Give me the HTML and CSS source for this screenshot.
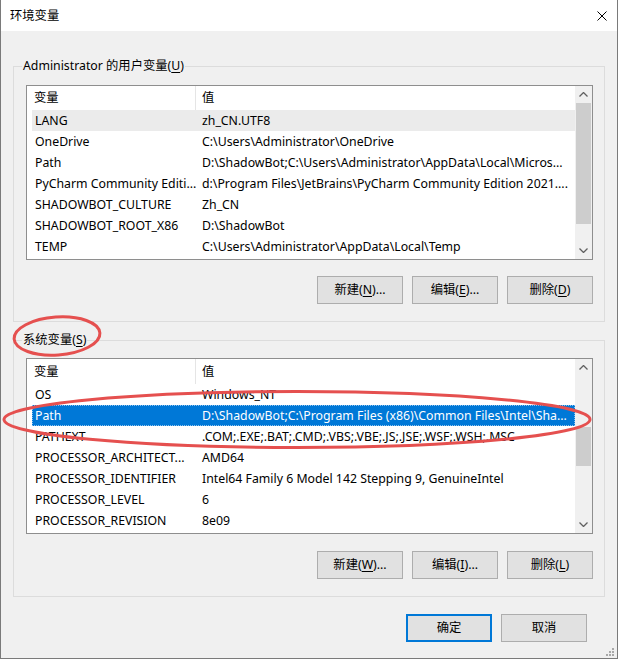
FILE: index.html
```html
<!DOCTYPE html>
<html lang="zh-CN">
<head>
  <meta charset="UTF-8">
  <title>环境变量</title>
  <link rel="stylesheet" href="styles.css">
</head>
<body>
  <div class="window">
    <div class="titlebar">
      <span class="title">环境变量</span>
      <svg class="close" width="10" height="10" viewBox="0 0 10 10">
        <path d="M0.5 0.5 L9.5 9.5 M9.5 0.5 L0.5 9.5" stroke="#000" stroke-width="1" fill="none"/>
      </svg>
    </div>

    <!-- 用户变量 -->
    <fieldset class="group group-user">
      <legend>Administrator 的用户变量(<u>U</u>)</legend>
      <div class="listview">
        <div class="list">
          <div class="list-head">
            <span class="head-name">变量</span>
            <span class="head-value">值</span>
          </div>
          <div class="row row-inactive"><span class="name">LANG</span><span class="value">zh_CN.UTF8</span></div>
          <div class="row"><span class="name">OneDrive</span><span class="value">C:\Users\Administrator\OneDrive</span></div>
          <div class="row"><span class="name">Path</span><span class="value">D:\ShadowBot;C:\Users\Administrator\AppData\Local\Micros...</span></div>
          <div class="row"><span class="name">PyCharm Community Editi...</span><span class="value">d:\Program Files\JetBrains\PyCharm Community Edition 2021....</span></div>
          <div class="row"><span class="name">SHADOWBOT_CULTURE</span><span class="value">Zh_CN</span></div>
          <div class="row"><span class="name">SHADOWBOT_ROOT_X86</span><span class="value">D:\ShadowBot</span></div>
          <div class="row"><span class="name">TEMP</span><span class="value">C:\Users\Administrator\AppData\Local\Temp</span></div>
        </div>
        <div class="scrollbar">
          <div class="arrow">
            <svg width="9" height="5" viewBox="0 0 9 5"><polyline points="0.5,4.5 4.5,0.5 8.5,4.5" fill="none" stroke="#606060" stroke-width="1.3"/></svg>
          </div>
          <div class="thumb thumb-user"></div>
          <div class="track"></div>
          <div class="arrow">
            <svg width="9" height="5" viewBox="0 0 9 5"><polyline points="0.5,0.5 4.5,4.5 8.5,0.5" fill="none" stroke="#606060" stroke-width="1.3"/></svg>
          </div>
        </div>
      </div>
      <div class="buttons">
        <button class="btn">新建(<u>N</u>)...</button>
        <button class="btn">编辑(<u>E</u>)...</button>
        <button class="btn">删除(<u>D</u>)</button>
      </div>
    </fieldset>

    <!-- 系统变量 -->
    <fieldset class="group group-system">
      <legend>系统变量(<u>S</u>)</legend>
      <div class="listview">
        <div class="list">
          <div class="list-head">
            <span class="head-name">变量</span>
            <span class="head-value">值</span>
          </div>
          <div class="row"><span class="name">OS</span><span class="value">Windows_NT</span></div>
          <div class="row row-selected"><span class="name">Path</span><span class="value">D:\ShadowBot;C:\Program Files (x86)\Common Files\Intel\Sha...</span></div>
          <div class="row"><span class="name">PATHEXT</span><span class="value">.COM;.EXE;.BAT;.CMD;.VBS;.VBE;.JS;.JSE;.WSF;.WSH;.MSC</span></div>
          <div class="row"><span class="name">PROCESSOR_ARCHITECT...</span><span class="value">AMD64</span></div>
          <div class="row"><span class="name">PROCESSOR_IDENTIFIER</span><span class="value">Intel64 Family 6 Model 142 Stepping 9, GenuineIntel</span></div>
          <div class="row"><span class="name">PROCESSOR_LEVEL</span><span class="value">6</span></div>
          <div class="row"><span class="name">PROCESSOR_REVISION</span><span class="value">8e09</span></div>
        </div>
        <div class="scrollbar">
          <div class="arrow">
            <svg width="9" height="5" viewBox="0 0 9 5"><polyline points="0.5,4.5 4.5,0.5 8.5,4.5" fill="none" stroke="#606060" stroke-width="1.3"/></svg>
          </div>
          <div class="thumb thumb-system"></div>
          <div class="track"></div>
          <div class="arrow">
            <svg width="9" height="5" viewBox="0 0 9 5"><polyline points="0.5,0.5 4.5,4.5 8.5,0.5" fill="none" stroke="#606060" stroke-width="1.3"/></svg>
          </div>
        </div>
      </div>
      <div class="buttons">
        <button class="btn">新建(<u>W</u>)...</button>
        <button class="btn">编辑(<u>I</u>)...</button>
        <button class="btn">删除(<u>L</u>)</button>
      </div>
    </fieldset>

    <div class="footer">
      <button class="btn btn-default">确定</button>
      <button class="btn">取消</button>
    </div>

    <!-- 红色圈注 + 右下角拖拽点 -->
    <svg class="overlay" width="618" height="659" viewBox="0 0 618 659">
      <ellipse cx="57" cy="336" rx="43" ry="19" transform="rotate(-4 57 336)" fill="none" stroke="#e5504f" stroke-width="3"/>
      <ellipse cx="297" cy="419.5" rx="293" ry="28" fill="none" stroke="#e5504f" stroke-width="3"/>
      <g fill="#a8a8a8">
        <rect x="612" y="648" width="2" height="2"/>
        <rect x="609" y="651" width="2" height="2"/>
        <rect x="612" y="651" width="2" height="2"/>
        <rect x="606" y="654" width="2" height="2"/>
        <rect x="609" y="654" width="2" height="2"/>
        <rect x="612" y="654" width="2" height="2"/>
      </g>
    </svg>
  </div>
</body>
</html>
```

FILE: styles.css
```css
body {
  margin: 0;
  font-family: "Noto Sans", "Noto Sans CJK SC", sans-serif;
  font-size: 12.3px;
  line-height: 16px;
  color: #000;
  background: #fff;
}

.window {
  position: relative;
  width: 616px;
  height: 658px;
  border: 1px solid #7a7a7a;
  border-top: none;
  background: #f0f0f0;
}

/* 标题栏 */
.titlebar {
  height: 31px;
  display: flex;
  justify-content: space-between;
  align-items: center;
  padding: 0 10px 0 9px;
  background: #fff;
}

.close {
  display: block;
}

/* 分组框 */
.group {
  margin: 27px 12px 0;
  padding: 11px 11px 17px 12px;
  border: 1px solid #dcdcdc;
  min-width: 0;
}

.group legend {
  margin-left: -4px;
  padding: 0 1px;
  line-height: 16px;
}

.group-system {
  margin-top: 10px;
  padding-top: 10px;
}

u {
  text-decoration-thickness: 1px;
  text-underline-offset: 2px;
}

/* 列表 */
.listview {
  display: flex;
  height: 175px;
  box-sizing: border-box;
  border: 1px solid #8e8e8e;
  background: #fff;
}

.group-system .listview {
  height: 176px;
}

.list {
  flex: 1;
  min-width: 0;
  overflow: hidden;
}

.list-head {
  display: flex;
  height: 24px;
  align-items: stretch;
}

.group-system .list-head {
  height: 25px;
}

.head-name {
  width: 169px;
  box-sizing: border-box;
  padding-left: 7px;
  border-right: 1px solid #e5e5e5;
  display: flex;
  align-items: center;
}

.head-value {
  padding-left: 6px;
  display: flex;
  align-items: center;
}

.row {
  display: flex;
  align-items: center;
  height: 21px;
  margin-left: 5px;
  white-space: nowrap;
}

.row .name {
  width: 164px;
  flex-shrink: 0;
  box-sizing: border-box;
  padding-left: 3px;
  overflow: hidden;
}

.row .value {
  flex: 1;
  padding-left: 6px;
  overflow: hidden;
}

.row-inactive {
  background: #ebebeb;
}

.row-selected {
  background: #0078d7;
  color: #fff;
  outline: 1px dotted #8cc2ee;
  outline-offset: -1px;
}

/* 滚动条 */
.scrollbar {
  width: 17px;
  display: flex;
  flex-direction: column;
  background: #f0f0f0;
}

.arrow {
  height: 17px;
  display: flex;
  justify-content: center;
  align-items: center;
  flex-shrink: 0;
}

.arrow svg {
  display: block;
}

.thumb {
  margin: 0 1px;
  background: #cdcdcd;
  flex-shrink: 0;
}

.thumb-user {
  height: 121px;
}

.thumb-system {
  margin-top: 51px;
  height: 39px;
}

.track {
  flex: 1;
}

/* 按钮 */
.buttons {
  display: flex;
  justify-content: flex-end;
  gap: 9px;
  margin-top: 16px;
}

.group-system .buttons {
  margin-top: 17px;
}

.btn {
  width: 86px;
  height: 28px;
  box-sizing: border-box;
  padding: 0;
  border: 1px solid #adadad;
  background: #e1e1e1;
  font: inherit;
  color: #000;
}

.btn-default {
  border: 2px solid #0078d7;
}

.footer {
  display: flex;
  justify-content: flex-end;
  gap: 9px;
  margin-top: 17px;
  padding-right: 30px;
}

/* 圈注层 */
.overlay {
  position: absolute;
  left: -1px;
  top: 0;
  pointer-events: none;
}
```
